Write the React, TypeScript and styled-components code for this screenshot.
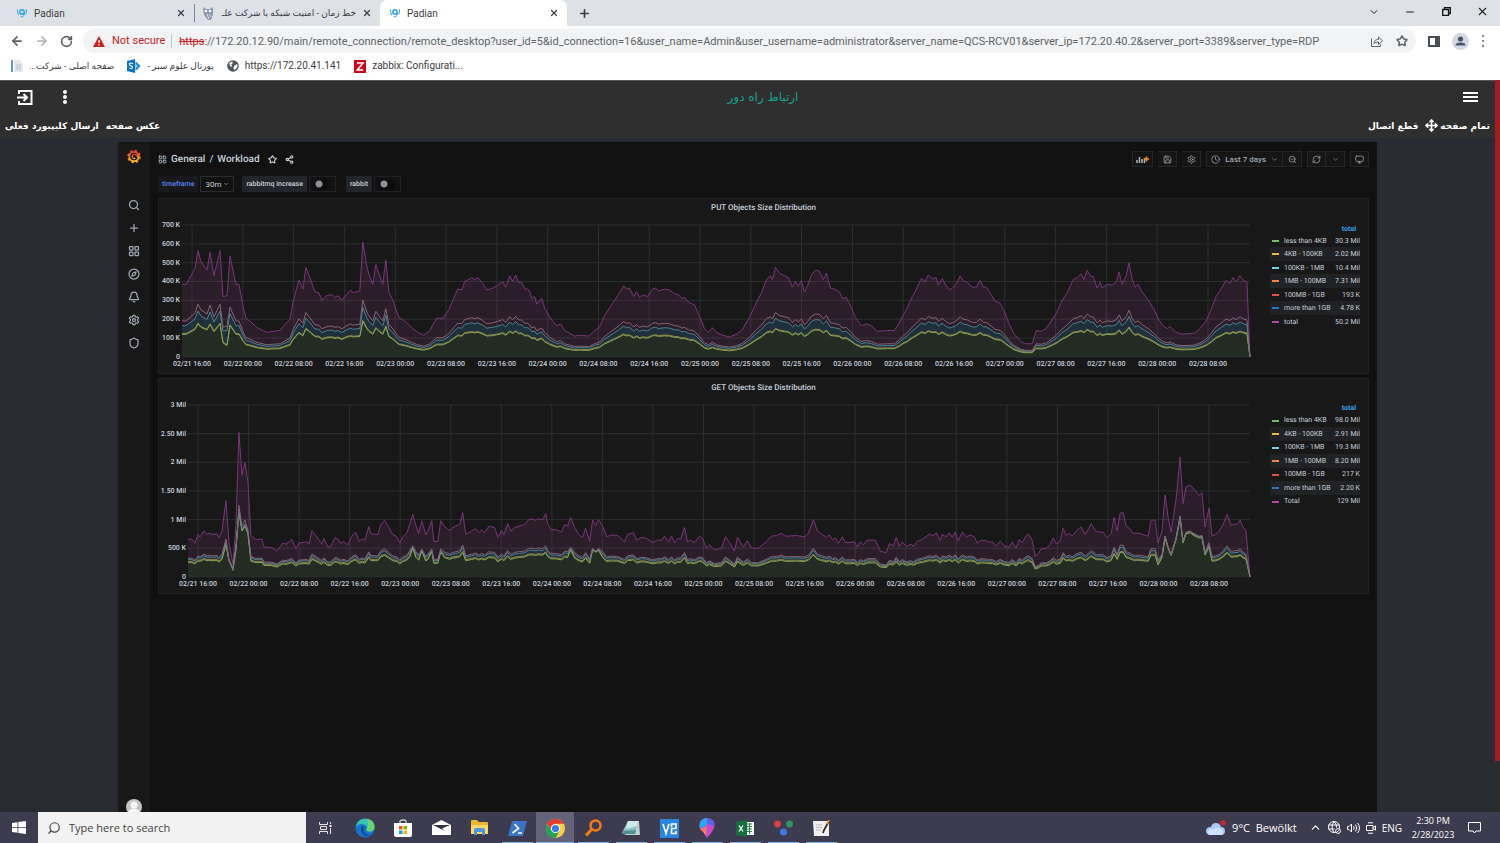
import React from 'react';
import styled, { createGlobalStyle, css } from 'styled-components';
import {
  ArrowLeft, ArrowRight, Bell, ChevronDown, ChevronUp, Clock, Compass, LayoutGrid, Minus, Monitor, Move,
  Plus, RefreshCw, RotateCw, Save, Search, Settings, Share2, Shield, Star, X, ZoomOut,
} from 'lucide-react';

const ui = "'Open Sans', 'DejaVu Sans', sans-serif";
const compact = "Roboto, 'DejaVu Sans', sans-serif";

const GlobalStyle = createGlobalStyle`
  * { box-sizing: border-box; }
  body {
    margin: 0;
    background: #282b31;
    font-family: ${ui};
  }
  button, input, select {
    font: inherit;
    color: inherit;
    border: 0;
    padding: 0;
    margin: 0;
    background: none;
  }
  a { color: inherit; text-decoration: none; }
  svg { display: block; flex-shrink: 0; }
`;

const Page = styled.div`
  display: flex;
  flex-direction: column;
  min-height: 100vh;
`;

/* ---------- browser ---------- */

const BrowserBar = styled.header`
  font-family: ${compact};
  [dir='rtl'] { font-size: 9px; }
`;

const TabStrip = styled.div`
  display: flex;
  align-items: stretch;
  height: 26px;
  background: #dee1e6;
  color: #3c4043;
`;

const Tab = styled.div<{ $active?: boolean; $divider?: boolean }>`
  display: flex;
  align-items: center;
  gap: 6px;
  width: ${p => (p.$divider ? '186px' : p.$active ? '187px' : '194px')};
  padding: 0 8px 0 ${p => (p.$divider ? '8px' : p.$active ? '9px' : '16px')};
  font-size: 10px;
  ${p => p.$active && css`
    background: white;
    border-radius: 7px 7px 0 0;
  `}
`;

const TabDivider = styled.span`
  width: 1px;
  height: 18px;
  align-self: center;
  margin-right: -1px;
  background: #80868b;
`;

const TabTitle = styled.a`
  flex: 1;
  white-space: nowrap;
`;

const IconButton = styled.button`
  display: flex;
  align-items: center;
  justify-content: center;
`;

const WindowButtons = styled.div`
  display: flex;
  margin-left: auto;
  color: #222;
  button { width: 36px; height: 23px; }
`;

const NewTab = styled(IconButton)`
  width: 34px;
`;

const AddressBar = styled.div`
  display: flex;
  align-items: center;
  height: 30px;
  padding: 0 15px 0 10px;
  background: white;
  color: #5f6368;
`;

const Nav = styled.div`
  display: flex;
  gap: 11px;
  margin-right: 10px;
`;

const Omnibox = styled.div`
  display: flex;
  flex: 1;
  align-items: center;
  height: 24px;
  padding: 0 8px 0 10px;
  border-radius: 12px;
  background: #f1f3f4;
  font-size: 11px;
`;

const NotSecure = styled.span`
  margin-left: 7px;
  padding-right: 6px;
  border-right: 1px solid #c4c7ca;
  color: #c5221f;
  line-height: 14px;
`;

const Scheme = styled.label`
  margin-left: 7px;
  color: #c5221f;
  text-decoration: line-through;
`;

const UrlInput = styled.input`
  flex: 1;
  min-width: 0;
  height: 20px;
  outline: none;
`;

const AddressIcons = styled.div`
  display: flex;
  gap: 13px;
`;

const Tools = styled.div`
  display: flex;
  align-items: center;
  gap: 12px;
  padding-left: 12px;
`;

const Bookmarks = styled.div`
  display: flex;
  align-items: center;
  height: 24px;
  padding: 0 11px 4px;
  gap: 13px;
  background: white;
  color: #3c4043;
  font-size: 10px;
  line-height: 16px;
`;

const Bookmark = styled.a`
  display: flex;
  align-items: center;
  gap: 6px;
  white-space: nowrap;
`;

/* ---------- web app ---------- */

const WebApp = styled.div`
  display: flex;
  flex: 1;
`;

const AppMain = styled.main`
  display: flex;
  flex: 1;
  flex-direction: column;
`;

const ScrollTrack = styled.div`
  width: 5px;
  background: #2c2c2c;
`;

const ScrollThumb = styled.div`
  height: 93%;
  background: #a61c22;
`;

const AppHeader = styled.header`
  border-top: 1px solid #555;
  background: #2f2f2f;
  color: white;
`;

const HeaderRow = styled.div`
  display: grid;
  grid-template-columns: 1fr auto 1fr;
  align-items: center;
  height: 32px;
  padding: 0 17px 0 16px;
`;

const AppTitle = styled.h1`
  margin: 0;
  padding-left: 32px;
  color: #17a08c;
  font: 12px 'DejaVu Sans', sans-serif;
`;

const HeaderSide = styled.div<{ $end?: boolean }>`
  display: flex;
  gap: 30px;
  justify-content: ${p => (p.$end ? 'flex-end' : 'flex-start')};
`;

const ActionRow = styled.div`
  display: flex;
  justify-content: space-between;
  height: 25px;
  padding: 0 5px;
`;

const Actions = styled.div`
  display: flex;
  align-items: center;
  gap: 7px;
  font: bold 9px 'DejaVu Sans', sans-serif;
  button { display: flex; align-items: center; gap: 2px; }
`;

const Remote = styled.div`
  display: flex;
  flex: 1;
  margin: 4px 118px 0;
  background: #111112;
  color: #c7d0d9;
  font-family: ${compact};
  text-rendering: geometricPrecision;
`;

/* ---------- grafana ---------- */

const SideMenu = styled.nav`
  display: flex;
  flex-direction: column;
  align-items: center;
  width: 32px;
  padding-top: 7px;
  background: #181819;
  color: #9fa7b3;
`;

const SideLinks = styled.div`
  display: flex;
  flex-direction: column;
  gap: 11px;
  margin-top: 35px;
`;

const Avatar = styled.div`
  width: 16px;
  height: 13px;
  margin-top: auto;
  overflow: hidden;
`;

const Dashboard = styled.section`
  flex: 1;
  min-width: 0;
  padding: 0 8px;
`;

const TopBar = styled.div`
  display: flex;
  align-items: center;
  justify-content: space-between;
  height: 34px;
`;

const Crumbs = styled.div`
  display: flex;
  align-items: center;
  gap: 4px;
  font-size: 10px;
  font-weight: 500;
  button { margin-left: 4px; }
`;

const ToolGroup = styled.div`
  display: flex;
  gap: 5px;
`;

const ToolSet = styled.div`
  display: flex;
`;

const ToolButton = styled.button<{ $wide?: boolean }>`
  display: flex;
  align-items: center;
  justify-content: center;
  gap: 5px;
  height: 16px;
  min-width: 19px;
  padding: 0 ${p => (p.$wide ? '4px' : '3px')};
  border: 1px solid #252628;
  background: #151516;
  color: #9fa7b3;
  font-size: 8px;
  font-weight: 500;
  & + & { border-left: 0; }
`;

const Variables = styled.div`
  display: flex;
  gap: 8px;
  height: 22px;
`;

const Variable = styled.div`
  display: flex;
  gap: 2px;
  height: 16px;
  font-size: 7px;
  font-weight: 500;
`;

const VarLabel = styled.label<{ $blue?: boolean }>`
  padding: 0 4px;
  background: ${p => (p.$blue ? '#17191d' : '#22252b')};
  color: ${p => (p.$blue ? '#5b84f0' : '#c7d0d9')};
  line-height: 16px;
`;

const SelectBox = styled.div`
  display: flex;
  align-items: center;
  width: 34px;
  padding: 0 4px;
  border: 1px solid #2c2d30;
  select {
    flex: 1;
    width: 18px;
    appearance: none;
    outline: none;
    font-size: 8px;
    font-weight: 400;
  }
`;

const ToggleBox = styled.div`
  display: flex;
  align-items: center;
  width: 27px;
  margin-right: 2px;
  padding: 0 4px;
  border: 1px solid #202124;
`;

const Toggle = styled.input`
  appearance: none;
  width: 16px;
  height: 9px;
  border-radius: 5px;
  background: radial-gradient(circle at 5px 4px, #8e9094 3px, transparent 4px) #0b0c0e;
`;

const Panel = styled.article`
  margin-bottom: 4px;
  border: 1px solid #202123;
  background: #181819;
`;

const PanelTitle = styled.h2`
  margin: 0;
  font-size: 8px;
  font-weight: 500;
  line-height: 18px;
  text-align: center;
`;

const PanelBody = styled.div`
  display: flex;
  align-items: flex-start;
`;

const Plot = styled.svg`
  flex: 1;
  min-width: 0;
  height: auto;
  text {
    fill: #c7d0d9;
    font-size: 7px;
    font-weight: 500;
  }
`;

const Legend = styled.table`
  width: 90px;
  margin: 6px 8px 0 8px;
  border-spacing: 0;
  font-size: 7px;
  th, td { padding: 0; font-weight: 400; white-space: nowrap; }
  thead th { height: 11px; padding-right: 4px; color: #33a2e5; font-weight: 700; text-align: right; }
  tbody th { padding-left: 2px; text-align: left; }
  tbody td { text-align: right; }
  tbody tr { height: 13px; }
  tbody tr:nth-child(even) { height: 14px; background: #212226; }
`;

const Swatch = styled.span<{ $color: string }>`
  display: inline-block;
  width: 7px;
  height: 2px;
  margin-right: 5px;
  vertical-align: middle;
  background: ${p => p.$color};
`;

/* ---------- taskbar ---------- */

const Taskbar = styled.footer`
  display: flex;
  align-items: stretch;
  height: 31px;
  background: #3d3b4f;
  color: white;
`;

const StartButton = styled(IconButton)`
  width: 38px;
`;

const SearchBox = styled.label`
  display: flex;
  align-items: center;
  gap: 8px;
  width: 268px;
  padding-left: 9px;
  background: #f2f2f2;
  color: #444;
  svg { transform: scaleX(-1); }
  input {
    flex: 1;
    min-width: 0;
    outline: none;
    font-size: 11px;
  }
  input::placeholder { color: #444; opacity: 1; }
`;

const TaskItems = styled.div`
  display: flex;
  margin-left: 2px;
`;

const TaskItem = styled.button<{ $running?: boolean; $active?: boolean }>`
  display: flex;
  align-items: center;
  justify-content: center;
  width: 38px;
  padding-top: ${p => (p.$running ? '1px' : '0')};
  background: ${p => (p.$active ? '#65637a' : 'transparent')};
  ${p => p.$running && css`
    background-image: linear-gradient(#76b9ed, #76b9ed);
    background-position: center bottom;
    background-repeat: no-repeat;
    background-size: ${p.$active ? '38px' : '31px'} 1px;
  `}
`;

const Tray = styled.div`
  display: flex;
  align-items: center;
  gap: 6px;
  margin-left: auto;
  padding-right: 19px;
  font-size: 10px;
`;

const Weather = styled.button`
  display: flex;
  align-items: center;
  gap: 6px;
  margin-right: 6px;
  font-size: 11px;
`;

const DateTime = styled.div`
  width: 50px;
  margin-right: 4px;
  font-size: 9px;
  line-height: 14px;
  text-align: center;
`;

/* ---------- data ---------- */

type Point = [number, number, number?];

const putPoints: Point[] = [
  [182, 385], [186, 385], [192, 440], [195, 470], [198, 565], [201, 505], [207, 460], [210, 555], [214, 430], [220, 565],
  [223, 320, 75], [227, 325, 60], [230, 535], [233, 460], [236, 385], [239, 385], [243, 270], [246, 205], [250, 190], [257, 155],
  [267, 130], [273, 135], [280, 140], [283, 160], [290, 200], [293, 290], [299, 408], [303, 360], [306, 475], [310, 420],
  [315, 345], [319, 340], [322, 300], [327, 325], [332, 330], [335, 315], [338, 325], [342, 300], [347, 335], [351, 355],
  [353, 340], [360, 350], [363, 610], [367, 480], [369, 440], [373, 385], [376, 490], [379, 440], [383, 385], [386, 515],
  [389, 345], [393, 300], [399, 210], [405, 190], [412, 155], [418, 130], [424, 115], [430, 140], [433, 170], [437, 205],
  [443, 205], [449, 250], [453, 300], [458, 360], [462, 355], [465, 400], [472, 420], [475, 410], [478, 420], [483, 390],
  [487, 355], [493, 365], [498, 380], [503, 400], [506, 370], [510, 430], [513, 400], [516, 435], [519, 395], [522, 395],
  [525, 360], [528, 360], [530, 345], [532, 310], [535, 320], [537, 280], [542, 310], [545, 260], [550, 210], [557, 165],
  [561, 175], [565, 140], [570, 125], [575, 110], [580, 115], [589, 110], [595, 140], [600, 160], [605, 220], [610, 260],
  [615, 300], [620, 340], [624, 378], [627, 360], [630, 365], [634, 320], [637, 345], [640, 315], [643, 330], [648, 320],
  [653, 360], [656, 365], [659, 350], [665, 360], [670, 355], [675, 335], [679, 330], [682, 310], [685, 315], [689, 290],
  [695, 275], [700, 215], [705, 150], [709, 130], [713, 155], [717, 130], [723, 115], [730, 105], [737, 120], [743, 145],
  [750, 210], [757, 290], [762, 340], [767, 410], [771, 430], [773, 410], [776, 475], [780, 445], [785, 430], [789, 420],
  [793, 370], [796, 400], [799, 375], [802, 405], [805, 345], [808, 375], [812, 435], [816, 460], [820, 455], [824, 410],
  [827, 445], [831, 365], [835, 360], [840, 345], [843, 310], [847, 315], [852, 260], [856, 210], [862, 165], [867, 175],
  [872, 165], [878, 135], [888, 140], [895, 140], [900, 180], [903, 215], [908, 260], [913, 320], [917, 360], [922, 415],
  [926, 400], [929, 435], [933, 415], [937, 420], [939, 380], [943, 415], [946, 385], [950, 355], [953, 365], [957, 385],
  [961, 430], [964, 405], [968, 395], [973, 370], [977, 370], [981, 405], [984, 370], [987, 370], [992, 330], [996, 295],
  [1001, 285], [1005, 240], [1010, 175], [1015, 120], [1022, 80], [1027, 70], [1033, 70], [1037, 140], [1042, 135], [1047, 150],
  [1052, 190], [1057, 230], [1063, 300], [1068, 340], [1074, 410], [1078, 420], [1082, 440], [1085, 410], [1088, 460], [1092, 425],
  [1094, 430], [1098, 365], [1101, 395], [1103, 365], [1108, 385], [1113, 380], [1117, 395], [1120, 450], [1123, 385], [1127, 430],
  [1130, 500], [1133, 415], [1136, 370], [1139, 385], [1143, 345], [1150, 295], [1155, 250], [1160, 195], [1164, 165], [1168, 150],
  [1171, 160], [1177, 130], [1183, 120], [1195, 125], [1200, 145], [1207, 190], [1212, 250], [1217, 320], [1222, 360], [1227, 405],
  [1231, 390], [1234, 420], [1237, 400], [1241, 430], [1245, 405], [1248, 395], [1251, 0],
];

const getPoints: Point[] = [
  [188, 640], [191, 670], [195, 590], [198, 740], [200, 700], [204, 800], [207, 740], [209, 760], [213, 740], [217, 750],
  [219, 680], [222, 800], [226, 1330, 560], [229, 600, 280], [233, 220, 130], [236, 900, 500], [239, 2520, 1130], [242, 1780, 800],
  [245, 2000, 880], [248, 1650, 750], [251, 720], [255, 660], [258, 650], [262, 660], [264, 520], [268, 520], [272, 510], [277, 450],
  [280, 520], [283, 590], [286, 570], [289, 610], [292, 650], [296, 490], [299, 590], [307, 610], [309, 570], [312, 800],
  [316, 720], [322, 570], [324, 670], [328, 520], [331, 530], [335, 680], [338, 660], [341, 580], [343, 620], [348, 560],
  [352, 710], [356, 780], [359, 620], [363, 670], [365, 630], [369, 880], [371, 750], [378, 740], [381, 920], [385, 980],
  [389, 860], [393, 740], [397, 700], [400, 590], [403, 700], [407, 760], [410, 920], [413, 1090, 500], [416, 900], [419, 760],
  [422, 980, 450], [426, 730], [428, 790], [432, 980, 440], [434, 620], [438, 620], [441, 980, 430], [445, 870], [450, 810], [453, 860],
  [460, 920], [463, 1120], [466, 740], [472, 800], [476, 840], [479, 770], [482, 820], [485, 770], [489, 880], [495, 860],
  [498, 690], [502, 810], [504, 730], [508, 930], [511, 800], [515, 860], [520, 890], [525, 910], [529, 1000], [533, 1010],
  [536, 980], [538, 1010], [543, 1000], [546, 1100], [548, 930], [551, 830], [557, 820], [562, 780], [565, 910], [568, 890],
  [571, 1040, 470], [575, 860], [580, 720], [583, 690], [586, 850], [590, 620], [593, 990, 470], [596, 900, 430], [599, 1000, 460], [603, 890],
  [607, 700], [612, 730], [618, 720], [625, 610], [628, 740], [634, 770], [637, 640], [642, 690], [647, 670], [653, 600],
  [658, 640], [662, 640], [665, 710], [669, 610], [672, 710], [675, 590], [678, 670], [681, 660], [685, 860], [688, 610],
  [691, 640], [695, 600], [700, 710], [703, 670], [707, 500], [710, 560], [715, 470], [722, 500], [726, 700], [730, 600],
  [735, 450], [738, 690], [744, 520], [748, 630], [752, 500], [759, 500], [767, 620], [772, 710], [777, 720], [782, 760],
  [786, 710], [797, 720], [805, 700], [809, 760], [814, 1000], [818, 800], [822, 750], [827, 690], [830, 730], [833, 650],
  [836, 680], [839, 580], [843, 700], [846, 600], [850, 600], [855, 610], [858, 520], [861, 610], [864, 560], [868, 640],
  [876, 640], [881, 450], [887, 420], [890, 580], [894, 540], [897, 690], [900, 530], [903, 610], [907, 530], [912, 570],
  [914, 530], [918, 620], [923, 660], [930, 740], [934, 720], [937, 770], [941, 630], [943, 740], [947, 700], [950, 770],
  [953, 690], [956, 780], [959, 630], [963, 780], [967, 700], [971, 730], [975, 700], [978, 590], [982, 640], [987, 630],
  [990, 600], [993, 610], [997, 540], [1001, 620], [1005, 540], [1010, 510], [1013, 610], [1017, 500], [1020, 650], [1023, 590],
  [1026, 690], [1029, 750], [1033, 640], [1036, 360], [1039, 400], [1042, 490], [1047, 500], [1051, 560], [1054, 680], [1057, 580],
  [1061, 620], [1064, 850], [1067, 720], [1070, 760], [1073, 710], [1078, 820], [1082, 870], [1086, 740], [1089, 820], [1092, 930],
  [1097, 790], [1104, 780], [1108, 680], [1112, 750], [1115, 1040], [1118, 800], [1121, 1110], [1124, 1120], [1127, 880], [1130, 850],
  [1134, 760], [1140, 760], [1149, 710], [1152, 990], [1156, 990], [1159, 590, 210], [1163, 800, 340], [1166, 1430, 680], [1169, 1050, 500],
  [1172, 780, 370], [1177, 1350, 650], [1181, 2090, 1020], [1184, 1280, 590], [1187, 1570, 750], [1191, 1600, 770], [1195, 1530, 720],
  [1200, 1420, 680], [1203, 1470, 680], [1206, 870, 380], [1210, 1200, 520], [1213, 720], [1216, 730], [1220, 790], [1224, 910],
  [1228, 1090], [1232, 900], [1236, 920], [1239, 930], [1241, 990], [1244, 870], [1247, 800], [1251, 0],
];

const times: string[] = [];
for (let i = 0; i < 21; i++) {
  const hours = 16 + i * 8;
  times.push(`02/${21 + Math.floor(hours / 24)} ${String(hours % 24).padStart(2, '0')}:00`);
}

const colors = ['#73bf69', '#eab839', '#6ed0e0', '#ef843c', '#e24d42', '#1f78c1', '#ba43a9'];
const sizes = ['less than 4KB', '4KB - 100KB', '100KB - 1MB', '1MB - 100MB', '100MB - 1GB', 'more than 1GB'];

type ChartProps = {
  points: Point[];
  max: number;
  ticks: string[];
  left: number;
  firstTime: number;
  step: number;
  height: number;
  low: number;
  mid: number;
};

const TOP = 8;

const Chart = ({ points, max, ticks, left, firstTime, step, height, low, mid }: ChartProps) => {
  const y = (v: number) => TOP + height - (v / max) * height;
  const bottom = TOP + height;
  const toLine = (fn: (p: Point) => number) => points.map(p => `${p[0]},${y(fn(p)).toFixed(1)}`).join(' ');
  const area = (line: string) => `${left},${bottom} ${line} 1251,${bottom}`;

  const green = toLine(p => p[2] ?? p[1] * low);
  const yellow = toLine(p => (p[2] ?? p[1] * low) + max * 0.006);
  const blue = toLine(p => Math.max(p[1] * mid, (p[2] ?? 0) * 1.04));
  const orange = toLine(p => p[1] * 0.495);
  const total = toLine(p => p[1]);

  return (
    <Plot viewBox={`159 0 1104 ${height + 24}`} role="img">
      {ticks.map((tick, i) => {
        const ty = TOP + (height * i) / (ticks.length - 1);
        return (
          <g key={tick}>
            <line x1={left} x2={1251} y1={ty} y2={ty} stroke="#2b2f2f" />
            <text x={left - 2} y={ty + 2} textAnchor="end">{tick}</text>
          </g>
        );
      })}
      {times.map((time, i) => (
        <g key={time}>
          <line x1={firstTime + i * step} x2={firstTime + i * step} y1={TOP} y2={bottom} stroke="#2b2f2f" />
          <text x={firstTime + i * step} y={bottom + 9} textAnchor="middle">{time}</text>
        </g>
      ))}
      <polygon points={area(total)} fill="#ba43a9" fillOpacity="0.13" />
      <polygon points={area(blue)} fill="#0c4a50" fillOpacity="0.45" />
      <polygon points={area(green)} fill="#252c20" fillOpacity="0.85" />
      <g fill="none" strokeLinejoin="round">
        <polyline points={total} stroke="#7c347a" />
        <polyline points={yellow} stroke="#96803b" />
        <polyline points={green} stroke="#87a557" />
        <polyline points={blue} stroke="#4b8396" />
        <polyline points={orange} stroke="#866573" />
      </g>
    </Plot>
  );
};

type PanelProps = ChartProps & { title: string; totals: string[]; totalName: string };

const ChartPanel = ({ title, totals, totalName, ...chart }: PanelProps) => (
  <Panel>
    <PanelTitle>{title}</PanelTitle>
    <PanelBody>
      <Chart {...chart} />
      <Legend>
        <thead>
          <tr><th colSpan={2}>total</th></tr>
        </thead>
        <tbody>
          {[...sizes, totalName].map((name, i) => (
            <tr key={name}>
              <th scope="row"><Swatch $color={colors[i]} />{name}</th>
              <td>{totals[i]}</td>
            </tr>
          ))}
        </tbody>
      </Legend>
    </PanelBody>
  </Panel>
);

/* ---------- icons ---------- */

const PadianIcon = () => (
  <svg width="12" height="12" viewBox="0 0 12 12" fill="none" stroke="#2ba3ea">
    <circle cx="6" cy="5" r="2.2" strokeWidth="1.5" />
    <path d="M8 5v3.500q-1 2-3.500 1.200M1.500 2.500l.3 3.500 1 2M10.500 2.500l-.3 3.500-.6 1.500" />
  </svg>
);

const OwlIcon = () => (
  <svg width="12" height="13" viewBox="0 0 12 13">
    <path d="M1 0l3 2h4l3-2v7l-2 6H6L2 8z" fill="#8e95b0" />
    <circle cx="4" cy="4" r="1.3" fill="#fff" /><circle cx="8" cy="4" r="1.3" fill="#fff" />
    <path d="M5 7l2 5M7 7l2 3" stroke="#dfe2ec" />
  </svg>
);

const WarningIcon = () => (
  <svg width="12" height="11" viewBox="0 0 12 11">
    <path d="M6 0l6 11H0z" fill="#c5221f" />
    <path d="M6 4v3M6 8.2v1.2" stroke="#fff" strokeWidth="1.2" />
  </svg>
);

const ShareIcon = () => (
  <svg width="12" height="12" viewBox="0 0 12 12" fill="none" stroke="currentColor">
    <path d="M.5 3.5v8h9v-2M3 8.5q0-4 4.5-4V2l4 3.8-4 3.7V7Q4.500 7 3 8.500z" />
  </svg>
);

const SidePanelIcon = () => (
  <svg width="12" height="11" viewBox="0 0 12 11">
    <path d="M1 1h10v9H1z" fill="none" stroke="#4a4d51" strokeWidth="2" />
    <path d="M7 1h4v9H7z" fill="#4a4d51" />
  </svg>
);

const ProfileIcon = () => (
  <svg width="17" height="17" viewBox="0 0 17 17">
    <circle cx="8.500" cy="8.500" r="8.500" fill="#d3d8e3" />
    <circle cx="8.500" cy="6" r="2.600" fill="#4a5068" />
    <path d="M3.500 12.500q0-3 5-3t5 3z" fill="#4a5068" />
  </svg>
);

const DotsIcon = ({ r = 1, h = 12 }: { r?: number; h?: number }) => (
  <svg width="4" height={h} viewBox={`0 0 4 ${h}`} fill="currentColor">
    <circle cx="2" cy={r} r={r} /><circle cx="2" cy={h / 2} r={r} /><circle cx="2" cy={h - r} r={r} />
  </svg>
);

const RestoreIcon = () => (
  <svg width="9" height="9" viewBox="0 0 9 9" fill="none" stroke="#111">
    <path d="M.7 2.500h5.800v5.800H.7zM2.500 2.500V.7h5.800v5.800H6.500" strokeWidth="1.300" />
  </svg>
);

const PageIcon = () => (
  <svg width="12" height="12" viewBox="0 0 12 12">
    <path d="M0 0h2v12H0z" fill="#5c9bc9" />
    <path d="M3 0h6l3 4v8H3z" fill="#e4e8ec" />
    <path d="M5 5h5M5 7h5M5 9h5" stroke="#b8c1c9" />
  </svg>
);

const SharepointIcon = () => (
  <svg width="14" height="14" viewBox="0 0 14 14">
    <path d="M7 2l3 1 4 4-3 4-4 1z" fill="#9cc8e8" />
    <path d="M9 4l3 3-3 3" fill="none" stroke="#0a72c4" strokeWidth="1.300" />
    <path d="M0 2l8-2v14l-8-2z" fill="#0a72c4" />
    <path d="M6 4.800Q4 3.500 2.700 4.500T4.200 7Q6 7.800 5.200 9T2.300 9" fill="none" stroke="#fff" strokeWidth="1.100" />
  </svg>
);

const GlobeIcon = () => (
  <svg width="12" height="12" viewBox="0 0 12 12">
    <circle cx="6" cy="6" r="5.800" fill="#50555a" />
    <path d="M2 3l3-1.500 1 1.500-2 1.500 1 1-1 2zM7 6l3-2 .7 2-1.700 3-2 1-.5-2z" fill="#fff" />
  </svg>
);

const ZabbixIcon = () => (
  <svg width="12" height="13" viewBox="0 0 12 13">
    <path d="M0 0h12v13H0z" fill="#d0021b" />
    <path d="M3 3h6L3.300 10H9.200" fill="none" stroke="#fff" strokeWidth="1.600" />
  </svg>
);

const ExitIcon = () => (
  <svg width="17" height="15" viewBox="0 0 17 15" fill="none" stroke="#fff" strokeWidth="2">
    <path d="M3 4V1h12.500v13H3v-3M1 7.500h9M7.500 4l3.500 3.500L7.500 11" />
  </svg>
);

const MenuIcon = () => (
  <svg width="15" height="10" viewBox="0 0 15 10" stroke="#fff" strokeWidth="2">
    <path d="M0 1h15M0 5h15M0 9h15" />
  </svg>
);

const GrafanaIcon = () => (
  <svg width="14" height="15" viewBox="0 0 14 15" fill="none">
    <defs>
      <linearGradient id="flame" x1="0" y1="0" x2="0" y2="1">
        <stop offset="0" stopColor="#e8452a" />
        <stop offset="1" stopColor="#f9b52c" />
      </linearGradient>
    </defs>
    <circle cx="7" cy="7.500" r="5.800" stroke="url(#flame)" strokeWidth="1.800" strokeDasharray="2.400 2.150" />
    <circle cx="7" cy="7.500" r="4.700" stroke="url(#flame)" strokeWidth="1.800" />
    <path d="M10.800 8.500Q10.500 5.300 7.600 5.400T5.400 8.300q1 2 2.800.8" stroke="url(#flame)" strokeWidth="1.200" />
  </svg>
);

const AddPanelIcon = () => (
  <svg width="13" height="9" viewBox="0 0 13 9" fill="none">
    <path d="M1 5v3M3.500 2v6M6 4v4M8.500 3v5" stroke="#a9adb5" strokeWidth="1.600" />
    <path d="M10.500 1.500v5M8 4h5" stroke="#f08a24" strokeWidth="1.600" />
  </svg>
);

const AvatarIcon = () => (
  <svg width="16" height="16" viewBox="0 0 16 16">
    <circle cx="8" cy="8" r="8" fill="#c4c4c4" />
    <circle cx="8" cy="6" r="3.600" fill="#f6f6f6" />
    <path d="M2 14q1-4.500 6-4.500t6 4.500z" fill="#f6f6f6" />
  </svg>
);

const WindowsIcon = () => (
  <svg width="14" height="13" viewBox="0 0 14 13" fill="#fff">
    <path d="M0 2l5.500-.8V6H0zM6.300 1L14 0v6H6.300zM0 6.800h5.500v5L0 11zM6.300 6.800H14V13l-7.700-1z" />
  </svg>
);

const TaskViewIcon = () => (
  <svg width="13" height="12" viewBox="0 0 13 12" fill="none" stroke="#e6e6ea">
    <path d="M.5 0v2.500h8V0M.5 12V9.500h8V12M1.500 4.500h6v3h-6zM11.500 0v2M11.500 6v6" />
    <path d="M10.500 3h2v2h-2z" fill="#fff" stroke="none" />
  </svg>
);

const EdgeIcon = () => (
  <svg width="20" height="20" viewBox="0 0 20 20">
    <circle cx="10" cy="10" r="9.500" fill="#1773c9" />
    <path d="M.7 9Q2 1 10 .5q9 .5 9.500 8 0 5-5 5-3.500 0-3-2.500Q13 8 9 6.500 4 5 .7 9z" fill="#35c1b6" />
    <path d="M12 1q7 1 7.500 7.500 0 5-5 5-3.500 0-3-2.500 3-3 .5-10z" fill="#68d46b" />
    <path d="M7 8q-3 5 2 9 4 2 8-1-6 2-8-2-1-3 0-5z" fill="#0c4a92" />
  </svg>
);

const StoreIcon = () => (
  <svg width="18" height="18" viewBox="0 0 18 18">
    <path d="M6 5V2.500Q6 1 9 1t3 1.500V5" fill="none" stroke="#c9cfd8" strokeWidth="1.300" />
    <path d="M0 4h18v12q0 2-2 2H2q-2 0-2-2z" fill="#fff" />
    <path d="M5 7h3.500v3.500H5z" fill="#f25022" /><path d="M9.500 7H13v3.500H9.500z" fill="#7fba00" />
    <path d="M5 11.500h3.500V15H5z" fill="#00a4ef" /><path d="M9.500 11.500H13V15H9.500z" fill="#ffb900" />
  </svg>
);

const MailIcon = () => (
  <svg width="19" height="15" viewBox="0 0 19 15">
    <path d="M0 5l9.500-5L19 5v10H0z" fill="#fff" />
    <path d="M1 5h17l-8 3.500 3 2.500z" fill="#33314a" />
  </svg>
);

const FolderIcon = () => (
  <svg width="17" height="15" viewBox="0 0 17 15">
    <path d="M0 1q0-1 1-1h5l1.500 2H16q1 0 1 1v11H0z" fill="#f0b62e" />
    <path d="M0 5h17v9H0z" fill="#ffd966" />
    <path d="M3 15V9.500Q3 8 5 8h7q2 0 2 1.500V15h-3v-3H6v3z" fill="#4a97dc" />
  </svg>
);

const PowerShellIcon = () => (
  <svg width="19" height="15" viewBox="0 0 19 15">
    <path d="M4 0h15l-4 15H0z" fill="#3a73c8" />
    <path d="M6.500 3l4 4.500L4.500 12M10 12h4" fill="none" stroke="#fff" strokeWidth="1.600" />
  </svg>
);

const ChromeIcon = () => (
  <svg width="19" height="19" viewBox="0 0 20 20">
    <circle cx="10" cy="10" r="10" fill="#ffcd40" />
    <path d="M1.300 5A10 10 0 0 1 18.700 5H10L6 12.300z" fill="#e33b2e" />
    <path d="M1.300 5A10 10 0 0 0 10 20l4.300-7.500L6 12.500z" fill="#21a453" />
    <circle cx="10" cy="10" r="4.800" fill="#fff" /><circle cx="10" cy="10" r="3.800" fill="#3a7de8" />
  </svg>
);

const FinderIcon = () => (
  <svg width="17" height="18" viewBox="0 0 17 18" fill="none" stroke="#f57c14">
    <circle cx="10.500" cy="6.500" r="5" strokeWidth="2.500" />
    <path d="M7 10l-6 6.500" strokeWidth="3" />
  </svg>
);

const NotepadIcon = () => (
  <svg width="18" height="17" viewBox="0 0 18 17">
    <path d="M6 1h11l1 14H4L0 13z" fill="#c3ccd0" />
    <path d="M6 1h10l-3 13H0z" fill="#8ec3c6" />
    <path d="M6 1h10l-1 5L4 9z" fill="#d0ebeb" />
    <path d="M1 11l13-1-1 4H0z" fill="#4f8f96" />
  </svg>
);

const VncIcon = () => (
  <svg width="19" height="19" viewBox="0 0 19 19">
    <path d="M0 0h19v19H0z" fill="#2b84e0" />
    <path d="M3 5l3 9.500L9 5M11.500 8V5H16v4.500h-4.500v5H16V12" fill="none" stroke="#fff" strokeWidth="1.600" />
  </svg>
);

const Paint3dIcon = () => (
  <svg width="16" height="20" viewBox="0 0 16 20">
    <path d="M8 0Q16 1 15.500 8 14 14 8 20 5 14 1 11-1 1 8 0z" fill="#c74bd0" />
    <path d="M8 0Q-1 1 .7 10 6 10 8 6z" fill="#28a9ef" />
    <path d="M8 0q8 1 7.500 8L8 6z" fill="#5a62e8" />
    <path d="M1 11q7-1 7-5l-1 12Q5 14 1 11z" fill="#ff7a59" />
  </svg>
);

const ExcelIcon = () => (
  <svg width="18" height="17" viewBox="0 0 18 17">
    <path d="M9 2h9v13H9z" fill="#f3f8f4" />
    <path d="M11 4h5M11 6.500h5M11 9h5M11 11.500h5M13.500 3v11" stroke="#2a8150" />
    <path d="M0 2l11-2v17L0 15z" fill="#17703d" />
    <path d="M3 5.500l4 6M7 5.500l-4 6" stroke="#fff" strokeWidth="1.300" />
  </svg>
);

const BallsIcon = () => (
  <svg width="19" height="16" viewBox="0 0 19 16">
    <circle cx="3.500" cy="4" r="3.400" fill="#dc3f4f" /><circle cx="15.500" cy="4" r="3.400" fill="#2f9464" />
    <circle cx="9.500" cy="12" r="3.600" fill="#3f78e0" />
  </svg>
);

const WriterIcon = () => (
  <svg width="17" height="17" viewBox="0 0 17 17">
    <path d="M0 1h14l2 3v12H1z" fill="#f1f1f1" />
    <path d="M3 5h6M3 7.500h6M3 10h5" stroke="#bbb" />
    <path d="M16 1l-5 9-1 3" stroke="#3b2a20" strokeWidth="1.800" /><path d="M16 0l-2 4" stroke="#e0913a" strokeWidth="2" />
  </svg>
);

const CloudIcon = () => (
  <svg width="20" height="16" viewBox="0 0 20 16">
    <path d="M5 15Q0 15 0 11t5-4q1-4 5-4t5 4q4 0 4 4t-4 4z" fill="#a9c9f6" />
    <path d="M4 15q-3-1-2-4t6-2q4-3 7 0t1 6z" fill="#cfe0fb" />
    <circle cx="17" cy="3" r="2.700" fill="#c9252d" />
  </svg>
);

const NetworkIcon = () => (
  <svg width="13" height="13" viewBox="0 0 13 13" fill="none" stroke="#fff">
    <circle cx="6" cy="6" r="5.500" /><path d="M.5 4h11M.5 8h6M6 .5Q2 6 6 11.500M6 .5q3 3 2.500 6" />
    <circle cx="10" cy="10" r="2.400" fill="#3d3b4f" /><path d="M8.500 11.500l3-3" />
  </svg>
);

const VolumeIcon = () => (
  <svg width="13" height="12" viewBox="0 0 13 12" fill="none" stroke="#fff">
    <path d="M.5 4.500H2L4.500 2v8L2 7.500H.5zM6.500 4.200q1.400 1.800 0 3.600M8.500 2.500q2.500 3.500 0 7M10.500 1q4 5 0 10" />
  </svg>
);

const MeetIcon = () => (
  <svg width="10" height="12" viewBox="0 0 10 12" fill="none" stroke="#fff">
    <path d="M2 .8h5M2 11.200h5M.5 3.500H7v5H.5zM7 5.500l2.500-1.500v4L7 6.500" />
  </svg>
);

const NotificationIcon = () => (
  <svg width="13" height="12" viewBox="0 0 13 12" fill="none" stroke="#fff">
    <path d="M.5.500h12v8.500H8L6.500 11 5 9H.5z" />
  </svg>
);

const sideIcons = [Search, Plus, LayoutGrid, Compass, Bell, Settings, Shield];
const sideNames = ['Search', 'Create', 'Dashboards', 'Explore', 'Alerting', 'Configuration', 'Server admin'];

const pinned = [
  { name: 'Edge', Icon: EdgeIcon },
  { name: 'Store', Icon: StoreIcon },
  { name: 'Mail', Icon: MailIcon },
  { name: 'Explorer', Icon: FolderIcon },
  { name: 'PowerShell', Icon: PowerShellIcon, running: true },
  { name: 'Chrome', Icon: ChromeIcon, running: true, active: true },
  { name: 'Finder', Icon: FinderIcon, running: true },
  { name: 'Notepad', Icon: NotepadIcon, running: true },
  { name: 'VNC', Icon: VncIcon, running: true },
  { name: 'Paint 3D', Icon: Paint3dIcon, running: true },
  { name: 'Excel', Icon: ExcelIcon, running: true },
  { name: 'Connections', Icon: BallsIcon, running: true },
  { name: 'Writer', Icon: WriterIcon, running: true },
];

const Browser = () => (
  <BrowserBar>
    <TabStrip>
      <Tab>
        <PadianIcon />
        <TabTitle href="#padian">Padian</TabTitle>
        <IconButton aria-label="Close tab"><X size={10} strokeWidth={3} /></IconButton>
      </Tab>
      <TabDivider />
      <Tab $divider>
        <OwlIcon />
        <TabTitle href="#timeline" dir="rtl">خط زمان - امنیت شبکه با شرکت علـ</TabTitle>
        <IconButton aria-label="Close tab"><X size={10} strokeWidth={3} /></IconButton>
      </Tab>
      <Tab $active>
        <PadianIcon />
        <TabTitle href="#remote">Padian</TabTitle>
        <IconButton aria-label="Close tab"><X size={10} strokeWidth={3} /></IconButton>
      </Tab>
      <NewTab aria-label="New tab"><Plus size={13} strokeWidth={3} /></NewTab>
      <WindowButtons>
        <IconButton aria-label="Search tabs"><ChevronDown size={12} /></IconButton>
        <IconButton aria-label="Minimize"><Minus size={12} /></IconButton>
        <IconButton aria-label="Restore"><RestoreIcon /></IconButton>
        <IconButton aria-label="Close"><X size={13} /></IconButton>
      </WindowButtons>
    </TabStrip>
    <AddressBar>
      <Nav>
        <IconButton aria-label="Back"><ArrowLeft size={14} strokeWidth={3} /></IconButton>
        <IconButton aria-label="Forward"><ArrowRight size={14} strokeWidth={3} color="#b5b8bb" /></IconButton>
        <IconButton aria-label="Reload"><RotateCw size={13} strokeWidth={3} /></IconButton>
      </Nav>
      <Omnibox>
        <WarningIcon />
        <NotSecure>Not secure</NotSecure>
        <Scheme htmlFor="url">https</Scheme>
        <UrlInput
          id="url"
          defaultValue="://172.20.12.90/main/remote_connection/remote_desktop?user_id=5&id_connection=16&user_name=Admin&user_username=administrator&server_name=QCS-RCV01&server_ip=172.20.40.2&server_port=3389&server_type=RDP"
        />
        <AddressIcons>
          <IconButton aria-label="Share"><ShareIcon /></IconButton>
          <IconButton aria-label="Bookmark"><Star size={12} strokeWidth={3} /></IconButton>
        </AddressIcons>
      </Omnibox>
      <Tools>
        <IconButton aria-label="Side panel"><SidePanelIcon /></IconButton>
        <IconButton aria-label="Profile"><ProfileIcon /></IconButton>
        <IconButton aria-label="Menu"><DotsIcon /></IconButton>
      </Tools>
    </AddressBar>
    <Bookmarks>
      <Bookmark href="#main"><PageIcon /><span dir="rtl">صفحه اصلی - شرکت...</span></Bookmark>
      <Bookmark href="#portal"><SharepointIcon /><span dir="rtl">پورتال علوم سبز -</span></Bookmark>
      <Bookmark href="#host"><GlobeIcon />https://172.20.41.141</Bookmark>
      <Bookmark href="#zabbix"><ZabbixIcon />zabbix: Configurati...</Bookmark>
    </Bookmarks>
  </BrowserBar>
);

const GrafanaView = () => (
  <Remote>
    <SideMenu>
      <a href="#home" aria-label="Home"><GrafanaIcon /></a>
      <SideLinks>
        {sideIcons.map((Icon, i) => (
          <a key={sideNames[i]} href={`#side-${i}`} aria-label={sideNames[i]}><Icon size={12} strokeWidth={2.5} /></a>
        ))}
      </SideLinks>
      <Avatar><AvatarIcon /></Avatar>
    </SideMenu>
    <Dashboard>
      <TopBar>
        <Crumbs>
          <LayoutGrid size={9} />
          <a href="#general">General</a>
          <span>/</span>
          <a href="#workload">Workload</a>
          <IconButton aria-label="Mark as favorite"><Star size={9} strokeWidth={3} /></IconButton>
          <IconButton aria-label="Share dashboard"><Share2 size={9} strokeWidth={3} /></IconButton>
        </Crumbs>
        <ToolGroup>
          <ToolButton aria-label="Add panel"><AddPanelIcon /></ToolButton>
          <ToolButton aria-label="Save"><Save size={9} /></ToolButton>
          <ToolButton aria-label="Settings"><Settings size={9} /></ToolButton>
          <ToolSet>
            <ToolButton $wide><Clock size={9} />Last 7 days<ChevronDown size={7} /></ToolButton>
            <ToolButton aria-label="Zoom out"><ZoomOut size={9} /></ToolButton>
          </ToolSet>
          <ToolSet>
            <ToolButton aria-label="Refresh"><RefreshCw size={9} /></ToolButton>
            <ToolButton aria-label="Refresh interval"><ChevronDown size={7} /></ToolButton>
          </ToolSet>
          <ToolButton aria-label="Cycle view"><Monitor size={9} /></ToolButton>
        </ToolGroup>
      </TopBar>
      <Variables>
        <Variable>
          <VarLabel $blue htmlFor="timeframe">timeframe</VarLabel>
          <SelectBox>
            <select id="timeframe"><option>30m</option></select>
            <ChevronDown size={6} />
          </SelectBox>
        </Variable>
        <Variable>
          <VarLabel htmlFor="increase">rabbitmq increase</VarLabel>
          <ToggleBox><Toggle id="increase" type="checkbox" /></ToggleBox>
        </Variable>
        <Variable>
          <VarLabel htmlFor="rabbit">rabbit</VarLabel>
          <ToggleBox><Toggle id="rabbit" type="checkbox" /></ToggleBox>
        </Variable>
      </Variables>
      <ChartPanel
        title="PUT Objects Size Distribution"
        points={putPoints}
        max={700}
        ticks={['700 K', '600 K', '500 K', '400 K', '300 K', '200 K', '100 K', '0']}
        left={182}
        firstTime={192}
        step={50.85}
        height={132}
        low={0.31}
        mid={0.43}
        totalName="total"
        totals={['30.3 Mil', '2.02 Mil', '10.4 Mil', '7.31 Mil', '193 K', '4.78 K', '50.2 Mil']}
      />
      <ChartPanel
        title="GET Objects Size Distribution"
        points={getPoints}
        max={3000}
        ticks={['3 Mil', '2.50 Mil', '2 Mil', '1.50 Mil', '1 Mil', '500 K', '0']}
        left={188}
        firstTime={198}
        step={50.6}
        height={172}
        low={0.38}
        mid={0.46}
        totalName="Total"
        totals={['98.0 Mil', '2.91 Mil', '19.3 Mil', '8.20 Mil', '217 K', '2.20 K', '129 Mil']}
      />
    </Dashboard>
  </Remote>
);

const App = () => (
  <>
    <GlobalStyle />
    <Page>
      <Browser />
      <WebApp>
        <AppMain>
          <AppHeader>
            <HeaderRow>
              <HeaderSide>
                <IconButton aria-label="Exit"><ExitIcon /></IconButton>
                <IconButton aria-label="More"><DotsIcon r={2} h={14} /></IconButton>
              </HeaderSide>
              <AppTitle dir="rtl">ارتباط راه دور</AppTitle>
              <HeaderSide $end>
                <IconButton aria-label="Menu"><MenuIcon /></IconButton>
              </HeaderSide>
            </HeaderRow>
            <ActionRow>
              <Actions>
                <button>ارسال کلیپبورد فعلی</button>
                <button>عکس صفحه</button>
              </Actions>
              <Actions>
                <button>قطع اتصال</button>
                <button><Move size={13} strokeWidth={3} />تمام صفحه</button>
              </Actions>
            </ActionRow>
          </AppHeader>
          <GrafanaView />
        </AppMain>
        <ScrollTrack><ScrollThumb /></ScrollTrack>
      </WebApp>
      <Taskbar>
        <StartButton aria-label="Start"><WindowsIcon /></StartButton>
        <SearchBox>
          <Search size={14} />
          <input placeholder="Type here to search" aria-label="Type here to search" />
        </SearchBox>
        <TaskItem aria-label="Task view"><TaskViewIcon /></TaskItem>
        <TaskItems>
          {pinned.map(({ name, Icon, running, active }) => (
            <TaskItem key={name} aria-label={name} $running={running} $active={active}><Icon /></TaskItem>
          ))}
        </TaskItems>
        <Tray>
          <Weather><CloudIcon /><span>9°C&nbsp; Bewölkt</span></Weather>
          <ChevronUp size={13} />
          <NetworkIcon />
          <VolumeIcon />
          <MeetIcon />
          <span>ENG</span>
          <DateTime>2:30 PM<br />2/28/2023</DateTime>
          <NotificationIcon />
        </Tray>
      </Taskbar>
    </Page>
  </>
);

export default App;
